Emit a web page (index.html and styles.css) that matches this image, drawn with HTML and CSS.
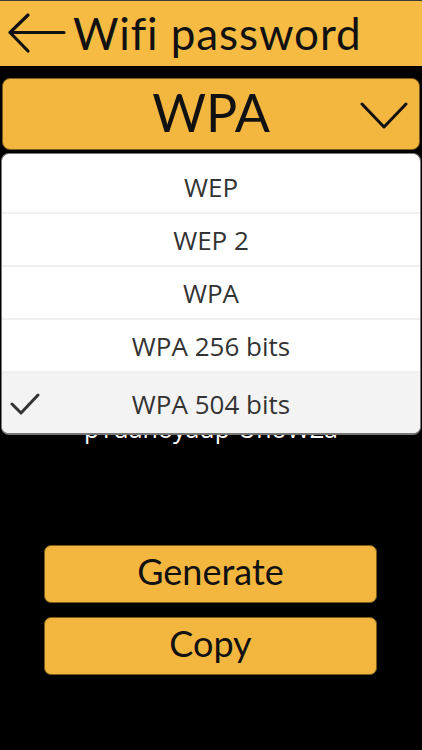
FILE: index.html
```html
<!DOCTYPE html>
<html>
<head>
<meta charset="utf-8">
<link rel="stylesheet" href="styles.css">
</head>
<body>
<div class="screen">
  <header class="topbar">
    <svg class="back" width="62" height="46" viewBox="0 0 62 46">
      <path d="M59 21.5H5M23 4L5 21.5L23 40" fill="none" stroke="#111" stroke-width="3.2" stroke-linecap="round" stroke-linejoin="round"/>
    </svg>
    <h1 class="title">Wifi password</h1>
  </header>
  <main class="content">
    <div class="select">
      <span class="select-value">WPA</span>
      <svg class="chevron" width="48" height="30" viewBox="0 0 48 30">
        <path d="M2 3L24 26L46 3" fill="none" stroke="#111" stroke-width="3" stroke-linecap="round" stroke-linejoin="round"/>
      </svg>
    </div>
    <div class="password">pYuanoyaup-UnoWZa</div>
    <div class="actions">
      <button class="btn">Generate</button>
      <button class="btn">Copy</button>
    </div>
  </main>
  <ul class="menu">
    <li class="item">WEP</li>
    <li class="item">WEP 2</li>
    <li class="item">WPA</li>
    <li class="item">WPA 256 bits</li>
    <li class="item selected">
      <svg class="check" width="30" height="26" viewBox="0 0 30 26">
        <path d="M2 13L11 22L28 4" fill="none" stroke="#333" stroke-width="3" stroke-linecap="round" stroke-linejoin="round"/>
      </svg>
      WPA 504 bits
    </li>
  </ul>
</div>
</body>
</html>
```

FILE: styles.css
```css
html, body {
  margin: 0;
  padding: 0;
  background: #000;
}
.screen {
  position: relative;
  width: 422px;
  height: 750px;
  overflow: hidden;
  background: #000;
  font-family: Lato, "Open Sans", sans-serif;
}
.topbar {
  height: 66px;
  box-sizing: border-box;
  border-top: 1px solid #3a3a3a;
  background: #f5bb42;
  display: flex;
  align-items: center;
  gap: 6px;
  padding-left: 5px;
}
.back {
  flex: none;
}
.title {
  margin: 0;
  font-weight: 400;
  font-size: 44px;
  color: #111;
  letter-spacing: 0.9px;
  line-height: 1;
  padding-bottom: 2px;
}
.content {
  padding: 12px 2px 0;
  display: flex;
  flex-direction: column;
}
.select {
  position: relative;
  height: 72px;
  box-sizing: border-box;
  background: #f3b73f;
  border: 1.5px solid #7a5a1a;
  border-radius: 8px;
  display: flex;
  align-items: center;
  justify-content: center;
}
.select-value {
  font-size: 52px;
  color: #111;
  line-height: 1;
  padding-bottom: 5px;
}
.chevron {
  position: absolute;
  right: 11px;
  top: 22px;
}
.password {
  margin-top: 263px;
  height: 30px;
  text-align: center;
  color: #fff;
  font-family: "Open Sans", sans-serif;
  font-size: 25px;
  line-height: 30px;
}
.actions {
  margin: 102px 43px 0 42px;
  display: flex;
  flex-direction: column;
  gap: 14px;
}
.btn {
  height: 58px;
  background: #f3b73f;
  border: 1.5px solid #7a5a1a;
  border-radius: 7px;
  font-family: Lato, "Open Sans", sans-serif;
  font-size: 36px;
  color: #111;
  padding: 0 0 6px;
  line-height: 1;
}
.menu {
  position: absolute;
  left: 1px;
  top: 153px;
  width: 420px;
  margin: 0;
  padding: 7px 0 0;
  list-style: none;
  background: #fff;
  border-radius: 8px;
  border: 1px solid #777;
  border-right-width: 1.5px;
  border-bottom-width: 2px;
  overflow: hidden;
  box-sizing: border-box;
}
.item {
  position: relative;
  height: 53px;
  display: flex;
  align-items: center;
  justify-content: center;
  font-family: "Open Sans", sans-serif;
  font-size: 26px;
  color: #333;
  border-bottom: 2px solid #f0f0f0;
  box-sizing: border-box;
}
.item.selected {
  background: #f3f3f3;
  border-bottom: none;
  height: 60px;
  padding-top: 2px;
}
.check {
  position: absolute;
  left: 8px;
  top: 18px;
}
```
